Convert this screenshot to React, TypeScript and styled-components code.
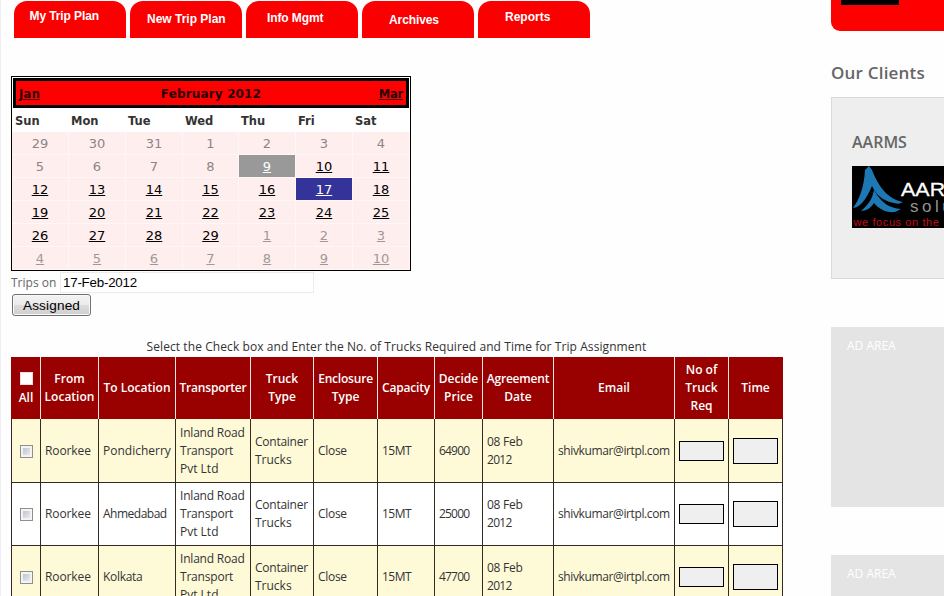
import React from "react";
import styled, { createGlobalStyle } from "styled-components";

const Global = createGlobalStyle`
  html, body { margin: 0; padding: 0; background: #fff; }
  body { overflow: hidden; font-family: "Open Sans", "Noto Sans", sans-serif; }
  * { box-sizing: border-box; }
`;

const Page = styled.div`
  display: flex;
  width: 944px;
  height: 596px;
  overflow: hidden;
  background: #fefefe;
`;

const Main = styled.main`
  flex: 0 0 831px;
  border-left: 1px solid #eeeef4;
  padding: 1px 0 0 10px;
`;

const Fit = styled.span<{ $ls?: number }>`
  display: block;
  white-space: nowrap;
  letter-spacing: ${(p) => p.$ls ?? 0}px;
`;

const Tabs = styled.nav`
  display: flex;
  gap: 4px;
  margin-left: 3px;
`;

const Tab = styled.div<{ $left: number; $top: number; $ls?: number }>`
  width: 112px;
  height: 37px;
  padding: ${(p) => p.$top}px 0 0 ${(p) => p.$left}px;
  border-radius: 13px 13px 0 0;
  background: #fb0000;
  color: #fff;
  font: bold 12px/14px "Liberation Sans", Arial, sans-serif;
  letter-spacing: ${(p) => p.$ls ?? 0}px;
  white-space: nowrap;
`;

const Calendar = styled.section`
  width: 400px;
  height: 195px;
  margin-top: 38px;
  border: 1px solid #000;
  background: #fff;
  font-family: "DejaVu Sans", Verdana, sans-serif;
`;

const CalTitle = styled.header`
  display: grid;
  grid-template-columns: 60px 1fr 60px;
  align-items: center;
  height: 30px;
  margin: 1px 1px 0;
  padding: 2px 3px 0;
  border: 3px solid #000;
  background: #fe0000;
  color: #2b0000;
  font-weight: bold;
  font-size: 12px;
  line-height: 16px;
`;

const MonthLink = styled.a<{ $end?: boolean }>`
  justify-self: ${(p) => (p.$end ? "end" : "start")};
  font-size: 11.5px;
  letter-spacing: ${(p) => (p.$end ? -0.2 : 0.3)}px;
  text-decoration: underline;
`;

const MonthName = styled.span`
  justify-self: center;
  letter-spacing: 0.15px;
`;

const Days = styled.div`
  display: grid;
  grid-template-columns: 57px 57px 57px 56px 57px 57px 57px;
`;

const DayName = styled.div`
  height: 24px;
  padding-left: 2px;
  color: #333;
  font-weight: bold;
  font-size: 11.5px;
  line-height: 26px;
  &:first-child { padding-left: 3px; }
`;

type Tone = "past" | "open" | "next" | "today" | "picked";
const toneInk: Record<Tone, string> = {
  past: "#8d8585",
  open: "#000",
  next: "#a09898",
  today: "#fff",
  picked: "#fff",
};
const toneFill: Record<Tone, string> = {
  past: "#ffeeee",
  open: "#ffeeee",
  next: "#ffeeee",
  today: "#999",
  picked: "#333399",
};

const Day = styled.div<{ $tone: Tone }>`
  height: 23px;
  border-right: 1px solid #fff7f7;
  border-bottom: 1px solid #fff7f7;
  background: ${(p) => toneFill[p.$tone]};
  color: ${(p) => toneInk[p.$tone]};
  text-decoration: ${(p) => (p.$tone === "past" ? "none" : "underline")};
  text-align: center;
  font-size: 13px;
  line-height: 23px;
`;

const TripLine = styled.div`
  display: flex;
  align-items: center;
  height: 22px;
  color: #666;
  font-size: 12px;
`;

const TripLabel = styled.label`
  width: 49px;
  white-space: nowrap;
`;

const DateField = styled.div`
  width: 254px;
  height: 21px;
  padding-left: 2px;
  border: 1px solid #ececec;
  background: #fff;
  color: #000;
  font: 13.33px/20px "Liberation Sans", Arial, sans-serif;
  letter-spacing: -0.22px;
`;

const AssignButton = styled.button`
  display: block;
  width: 79px;
  height: 22px;
  margin: 1px 0 0 1px;
  padding: 0;
  border: 1px solid #707070;
  border-radius: 3px;
  box-shadow: inset 0 0 0 1px #fafafa;
  background: linear-gradient(#f3f3f3 0%, #ebebeb 48%, #dcdcdc 52%, #cfcfcf 100%);
  color: #000;
  font: 13.6px/19px "Liberation Sans", Arial, sans-serif;
  letter-spacing: 0.15px;
`;

const Hint = styled.p`
  display: flex;
  justify-content: center;
  width: 771px;
  height: 19px;
  margin: 22px 0 0;
  color: #333;
  font-size: 12px;
  line-height: 17px;
`;

const Table = styled.div`
  width: 772px;
  font-size: 12px;
  line-height: 18px;
`;

const Row = styled.div<{ $head?: boolean; $tint?: boolean; $height: number }>`
  display: grid;
  grid-template-columns: 29px 58px 77px 75px 63px 64px 57px 48px 71px 121px 54px 54px;
  height: ${(p) => p.$height}px;
  border-left: 1px solid ${(p) => (p.$head ? "#990000" : "#332b22")};
  background: ${(p) => (p.$head ? "#990000" : p.$tint ? "#fefad8" : "#fff")};
  color: ${(p) => (p.$head ? "#fff" : "#333")};
  font-weight: ${(p) => (p.$head ? 600 : 400)};
`;

const HeadCell = styled.div`
  display: flex;
  flex-direction: column;
  align-items: center;
  justify-content: center;
  border-right: 1px solid #f5e6e6;
  &:last-child { border-right-color: #990000; }
`;

const Cell = styled.div<{ $center?: boolean }>`
  display: flex;
  flex-direction: column;
  align-items: ${(p) => (p.$center ? "center" : "flex-start")};
  justify-content: center;
  padding-left: ${(p) => (p.$center ? 0 : 4)}px;
  border-right: 1px solid #332b22;
  border-bottom: 1px solid #332b22;
`;

const HeadCheck = styled.span`
  width: 13px;
  height: 13px;
  margin: 3px 0 4px 1px;
  border: 1px solid #f0dede;
  background: #fff;
`;

const Check = styled.span`
  width: 13px;
  height: 13px;
  margin: 1px 0 0 1px;
  border: 1px solid #8e8f8f;
  background: linear-gradient(135deg, #b4bac4, #f6f6f6);
  box-shadow: inset 0 0 0 2px #f4f4f4;
`;

const Field = styled.span<{ $tall?: boolean }>`
  width: 45px;
  height: ${(p) => (p.$tall ? 26 : 20)}px;
  border: 1px solid #000;
  background: #efefef;
`;

const Side = styled.aside`
  flex: 1;
  min-width: 0;
  overflow: hidden;
`;

const RedBox = styled.div`
  height: 31px;
  padding-left: 10px;
  border-radius: 0 0 0 9px;
  background: #fe0000;
`;

const BlackBar = styled.div`
  width: 58px;
  height: 5px;
  background: #000;
`;

const SideTitle = styled.h2`
  height: 66px;
  margin: 0;
  padding-top: 30px;
  color: #666;
  font-weight: 600;
  font-size: 17px;
  line-height: 24px;
`;

const Clients = styled.section`
  width: 200px;
  height: 182px;
  padding: 32px 0 0 20px;
  border: 1px solid #dadada;
  background: #eee;
`;

const ClientName = styled.h3`
  height: 36px;
  margin: 0;
  color: #666;
  font-weight: 600;
  font-size: 16px;
  line-height: 24px;
`;

const AdBox = styled.section`
  width: 200px;
  height: 180px;
  margin-top: 48px;
  padding: 10px 0 0 16px;
  background: #e4e4e4;
  color: #fff;
  font-size: 12px;
  line-height: 18px;
`;

const LogoSvg = styled.svg`
  display: block;
`;

const Logo = () => (
  <LogoSvg width="160" height="62" viewBox="0 0 160 62">
    <rect width="160" height="62" fill="#000" />
    <path d="M17 0 L20 4 C25 17 34 33 51 36 C39 42 29 38 20 26 C14 36 8 41 1 42 C7 34 12 22 13 4 Z" fill="#1d78b4" />
    <path d="M20 20 C14 34 8 41 1 43 L7 41 C13 38 17 31 20 26 C27 39 38 42 47 38 C33 36 25 31 20 20" fill="#000" />
    <path d="M22 24 L25 29 C31 37 37 42 49 43 L43 46 C34 47 27 43 22 37 C19 42 14 45 9 45 C16 39 20 34 22 24 Z" fill="#1d78b4" />
    <g fontFamily="Liberation Sans, Arial, sans-serif">
      <text transform="translate(49 30) scale(1.13 1)" fontSize="19" fill="#fff" stroke="#fff" strokeWidth="0.3">AARM</text>
      <text x="58" y="46" fontSize="17" letterSpacing="3.5" fill="#96948f">solu</text>
      <text x="1.5" y="60" fontSize="11" letterSpacing="0.6" fill="#c40d16">we focus on the</text>
    </g>
  </LogoSvg>
);

const tabs = [
  { label: "My Trip Plan", left: 15.5, top: 8, ls: -0.1 },
  { label: "New Trip Plan", left: 17, top: 11, ls: 0 },
  { label: "Info Mgmt", left: 21, top: 10, ls: -0.1 },
  { label: "Archives", left: 27, top: 12, ls: -0.1 },
  { label: "Reports", left: 27, top: 9, ls: 0 },
];

const dayNames = ["Sun", "Mon", "Tue", "Wed", "Thu", "Fri", "Sat"];
const days: number[] = [
  29, 30, 31,
  ...Array.from({ length: 29 }, (_, i) => i + 1),
  ...Array.from({ length: 10 }, (_, i) => i + 1),
];
const toneOf = (i: number): Tone =>
  i < 11 ? "past" : i === 11 ? "today" : i === 19 ? "picked" : i < 32 ? "open" : "next";

type Line = [text: string, ls: number];
const heads: Line[][] = [
  [["From", 0], ["Location", 0]],
  [["To Location", 0]],
  [["Transporter", -0.2]],
  [["Truck", 0], ["Type", 0]],
  [["Enclosure", -0.2], ["Type", 0]],
  [["Capacity", -0.2]],
  [["Decide", 0], ["Price", 0]],
  [["Agreement", -0.2], ["Date", 0]],
  [["Email", 0]],
  [["No of", 0], ["Truck", 0], ["Req", 0]],
  [["Time", 0]],
];

const row = (to: Line, price: string): Line[][] => [
  [["Roorkee", -0.1]],
  [to],
  [["Inland Road", -0.2], ["Transport", -0.2], ["Pvt Ltd", 0]],
  [["Container", -0.25], ["Trucks", 0]],
  [["Close", -0.3]],
  [["15MT", -0.5]],
  [[price, -0.8]],
  [["08 Feb", -0.25], ["2012", -0.7]],
  [["shivkumar@irtpl.com", -0.38]],
];
const rows = [
  row(["Pondicherry", 0], "64900"),
  row(["Ahmedabad", -0.5], "25000"),
  row(["Kolkata", -0.3], "47700"),
];

const Lines = ({ lines }: { lines: Line[] }) => (
  <>
    {lines.map(([text, ls]) => (
      <Fit key={text} $ls={ls}>{text}</Fit>
    ))}
  </>
);

export default function App() {
  return (
    <>
      <Global />
      <Page>
        <Main>
          <Tabs>
            {tabs.map((t) => (
              <Tab key={t.label} $left={t.left} $top={t.top} $ls={t.ls}>{t.label}</Tab>
            ))}
          </Tabs>
          <Calendar>
            <CalTitle>
              <MonthLink>Jan</MonthLink>
              <MonthName>February 2012</MonthName>
              <MonthLink $end>Mar</MonthLink>
            </CalTitle>
            <Days>
              {dayNames.map((d) => <DayName key={d}>{d}</DayName>)}
              {days.map((d, i) => <Day key={i} $tone={toneOf(i)}>{d}</Day>)}
            </Days>
          </Calendar>
          <TripLine>
            <TripLabel><Fit>Trips on</Fit></TripLabel>
            <DateField>17-Feb-2012</DateField>
          </TripLine>
          <AssignButton>Assigned</AssignButton>
          <Hint>
            <Fit $ls={0.08}>Select the Check box and Enter the No. of Trucks Required and Time for Trip Assignment</Fit>
          </Hint>
          <Table>
            <Row $head $height={62}>
              <HeadCell><HeadCheck /><Fit>All</Fit></HeadCell>
              {heads.map((h, i) => <HeadCell key={i}><Lines lines={h} /></HeadCell>)}
            </Row>
            {rows.map((r, i) => (
              <Row key={i} $tint={i % 2 === 0} $height={i === 0 ? 64 : 63}>
                <Cell $center><Check /></Cell>
                {r.map((c, j) => <Cell key={j}><Lines lines={c} /></Cell>)}
                <Cell><Field /></Cell>
                <Cell><Field $tall /></Cell>
              </Row>
            ))}
          </Table>
        </Main>
        <Side>
          <RedBox><BlackBar /></RedBox>
          <SideTitle><Fit $ls={0.2}>Our Clients</Fit></SideTitle>
          <Clients>
            <ClientName><Fit>AARMS</Fit></ClientName>
            <Logo />
          </Clients>
          <AdBox><Fit>AD AREA</Fit></AdBox>
          <AdBox><Fit>AD AREA</Fit></AdBox>
        </Side>
      </Page>
    </>
  );
}
